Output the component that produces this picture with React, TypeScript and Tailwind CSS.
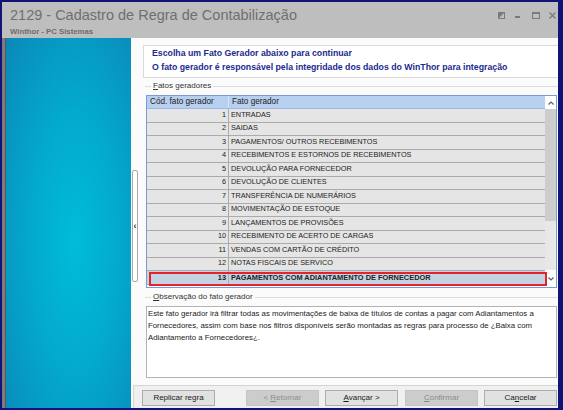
import React from 'react';

const fatos: [number, string][] = [
  [1, 'ENTRADAS'],
  [2, 'SAIDAS'],
  [3, 'PAGAMENTOS/ OUTROS RECEBIMENTOS'],
  [4, 'RECEBIMENTOS E ESTORNOS DE RECEBIMENTOS'],
  [5, 'DEVOLUÇÃO PARA FORNECEDOR'],
  [6, 'DEVOLUÇÃO DE CLIENTES'],
  [7, 'TRANSFERÊNCIA DE NUMERÁRIOS'],
  [8, 'MOVIMENTAÇÃO DE ESTOQUE'],
  [9, 'LANÇAMENTOS DE PROVISÕES'],
  [10, 'RECEBIMENTO DE ACERTO DE CARGAS'],
  [11, 'VENDAS COM CARTÃO DE CRÉDITO'],
  [12, 'NOTAS FISCAIS DE SERVICO'],
  [13, 'PAGAMENTOS COM ADIANTAMENTO DE FORNECEDOR'],
];

function TitleIcons() {
  return (
    <div className="flex items-start mt-[8px] text-[#7a7a7a]">
      <svg width="7" height="7" viewBox="0 0 7 7" className="mt-[2px]">
        <rect x="0.5" y="0.5" width="6" height="6" fill="none" stroke="currentColor" />
        <path d="M0 0H7L0 7Z" fill="currentColor" />
      </svg>
      <svg width="5" height="8" viewBox="0 0 5 8" className="ml-[10px]">
        <rect x="0" y="6" width="5" height="2" fill="currentColor" />
      </svg>
      <svg width="8" height="7" viewBox="0 0 8 7" className="ml-[12px] mt-[2px]">
        <rect x="0.5" y="0.5" width="7" height="6" fill="none" stroke="currentColor" />
        <rect x="0" y="0" width="8" height="2" fill="currentColor" />
      </svg>
      <svg width="7" height="7" viewBox="0 0 7 7" className="ml-[9px] mt-[2px]">
        <path d="M0.5 0.5L6.5 6.5M6.5 0.5L0.5 6.5" stroke="currentColor" strokeWidth="1.3" />
      </svg>
    </div>
  );
}

function GroupLabel({ first, rest }: { first: string; rest: string }) {
  return (
    <div className="flex items-center h-[14px]">
      <div className="w-[6px] h-px bg-[#dcdcdc] ml-[2px]" />
      <span className="px-[2px] text-[8px] leading-[10px] text-[#333]">
        <span className="underline">{first}</span>
        {rest}
      </span>
      <div className="flex-1 h-px bg-[#dcdcdc]" />
    </div>
  );
}

function Button({ children, disabled, className }: { children: React.ReactNode; disabled?: boolean; className?: string }) {
  return (
    <div
      className={`w-[73px] h-[16px] flex items-center justify-center text-[8px] border ${
        disabled ? 'bg-[#cccccc] border-[#c4c4c4] text-[#8c8c8c]' : 'bg-[#e1e1e1] border-[#adadad] text-[#1a1a1a]'
      } ${className ?? ''}`}
    >
      {children}
    </div>
  );
}

export default function App() {
  return (
    <div className="w-[563px] h-[410px] bg-[#101478] pt-[2px] pl-[2px] pr-[5px] pb-[2px] flex flex-col overflow-hidden font-['Liberation_Sans',Arial,sans-serif]">
      {/* Title bar */}
      <div className="h-[36px] bg-[#bebebe] flex justify-between pl-[8px] pr-[2px]">
        <div>
          <div className="mt-[5px] text-[14.5px] leading-[17px] text-[#6f6f6f]">2129 - Cadastro de Regra de Contabilização</div>
          <div className="mt-[3px] text-[7.75px] leading-[9px] font-bold text-[#6d6d6d]">Winthor - PC Sistemas</div>
        </div>
        <TitleIcons />
      </div>

      {/* Body */}
      <div className="flex-1 flex">
        <div className="w-[4px] bg-[#7c7c7c] border-r border-[#5a5a5a]" />
        <div className="w-[125px] bg-[radial-gradient(ellipse_at_55%_55%,#00bcd9_0%,#03a9ce_45%,#0a88b9_100%)]" />

        <div className="flex-1 flex flex-col bg-[#fbfbfb]">
          <div className="flex">
            {/* collapse handle */}
            <div className="w-[12px] pl-[1px]">
              <div className="mt-[132px] w-[6px] h-[112px] bg-white border border-[#a8a8a8] rounded-[2px] flex items-center justify-center text-[9px] font-bold text-[#333] leading-none">
                ‹
              </div>
            </div>

            <div className="flex-1 flex flex-col">
              {/* header box */}
              <div className="mt-[7px] h-[33px] bg-white border border-r-0 border-[#dadada] pl-[8px] text-[8.75px] leading-[14px] font-bold text-[#1c2a8e] whitespace-nowrap">
                <div>Escolha um Fato Gerador abaixo para continuar</div>
                <div>O fato gerador é responsável pela integridade dos dados do WinThor para integração</div>
              </div>

              <div className="mt-[1px]">
                <GroupLabel first="F" rest="atos geradores" />
              </div>

              {/* grid */}
              <div className="mt-[2px] ml-[3px] mr-[1px] h-[193px] border border-[#7b9bd3] bg-white flex">
                <div className="flex-1 flex flex-col">
                  <div className="h-[13px] bg-[#b8d0f0] border-b border-[#9fbbe4] flex text-[8.2px] text-[#222]">
                    <div className="w-[82px] pl-[3px] flex items-center border-r border-[#d6e4f6]">Cód. fato gerador</div>
                    <div className="flex-1 pl-[3px] flex items-center">Fato gerador</div>
                  </div>
                  {fatos.map(([cod, nome]) => {
                    const sel = cod === 13;
                    return (
                      <div
                        key={cod}
                        className={`relative h-[13.5px] flex border-b border-[#ababab] text-[#222] ${
                          sel ? 'bg-[#c5d4e2] font-bold text-[7.4px]' : 'bg-[#e5e5e5] text-[7.3px]'
                        }`}
                      >
                        <div className="w-[82px] pr-[2px] flex items-center justify-end border-r border-[#ababab]">{cod}</div>
                        <div className="flex-1 pl-[2px] flex items-center whitespace-nowrap">{nome}</div>
                        {sel && <div className="absolute left-[2px] -right-[2px] top-[1px] -bottom-[2px] border-2 border-[#e4232b]" />}
                      </div>
                    );
                  })}
                </div>
                {/* scrollbar */}
                <div className="w-[11px] flex flex-col">
                  <div className="h-[13px] bg-white flex items-center justify-center">
                    <svg width="6" height="4" viewBox="0 0 6 4">
                      <path d="M0.5 3.5L3 1L5.5 3.5" fill="none" stroke="#606060" strokeWidth="1.2" />
                    </svg>
                  </div>
                  <div className="h-[112px] bg-[#cdcdcd]" />
                  <div className="flex-1 bg-[#e8e8e8]" />
                  <div className="h-[17px] bg-white flex items-center justify-center">
                    <svg width="6" height="4" viewBox="0 0 6 4">
                      <path d="M0.5 0.5L3 3L5.5 0.5" fill="none" stroke="#606060" strokeWidth="1.2" />
                    </svg>
                  </div>
                </div>
              </div>

              <div className="mt-[2px]">
                <GroupLabel first="O" rest="bservação do fato gerador" />
              </div>

              {/* observation text */}
              <div className="mt-[2px] ml-[3px] mr-[1px] h-[72px] bg-white border border-[#b4b4b4] pl-[1px] pt-[1px] text-[7.8px] leading-[12px] text-[#222] whitespace-nowrap overflow-hidden">
                <div>Este fato gerador irá filtrar todas as movimentações de baixa de títulos de contas a pagar com Adiantamentos a</div>
                <div>Fornecedores, assim com base nos filtros disponíveis serão montadas as regras para processo de ¿Baixa com</div>
                <div>Adiantamento a Fornecedores¿.</div>
              </div>
            </div>
          </div>

          {/* button bar */}
          <div className="mt-[7px] ml-[2px] h-[23px] bg-[#f0f0f0] border-t border-l border-[#d4d4d4] flex items-start pt-[4px] pl-[8px]">
            <Button>Replicar regra</Button>
            <Button disabled className="ml-[31px]">
              &lt; <span className="underline ml-[2px]">R</span>etornar
            </Button>
            <Button className="ml-[6px]">
              <span className="underline">A</span>vançar &gt;
            </Button>
            <Button disabled className="ml-[7px]">
              <span className="underline">C</span>onfirmar
            </Button>
            <Button className="ml-[6px]">
              Ca<span className="underline">n</span>celar
            </Button>
          </div>
        </div>
      </div>
    </div>
  );
}
